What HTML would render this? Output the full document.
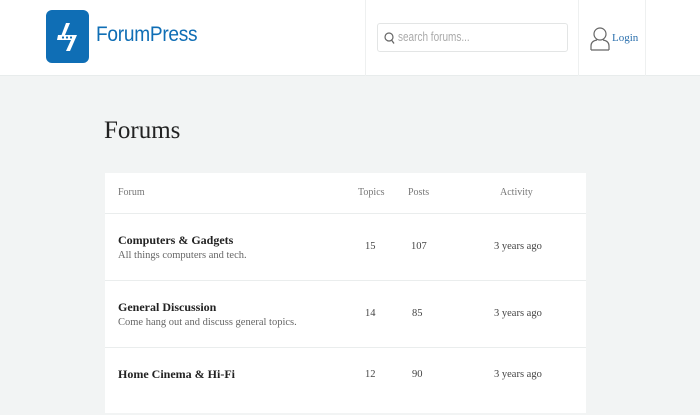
<!DOCTYPE html>
<html><head><meta charset="utf-8"><style>
*{margin:0;padding:0;box-sizing:border-box}
body{width:700px;height:400px;overflow:hidden;background:#f2f4f4;font-family:"Liberation Serif",serif;position:relative}
.hdr{position:absolute;left:0;top:0;width:700px;height:76px;background:#fff;border-bottom:1px solid #e8ecec}
.logo{position:absolute;left:46px;top:10px;width:43px;height:53px;background:#0f6eb5;border-radius:6px}
.brand{position:absolute;left:96px;top:23px;font-family:"Liberation Sans",sans-serif;font-size:21px;color:#0f6eb5;letter-spacing:-0.3px;transform:scaleX(.91);transform-origin:left}
.vl{position:absolute;top:0;height:76px;width:1px;background:#eef0f0}
.search{position:absolute;left:377px;top:23px;width:191px;height:29px;border:1px solid #e3e5e5;border-radius:3px;background:#fff}
.search span{position:absolute;left:20px;top:6px;font-family:"Liberation Sans",sans-serif;font-size:12.5px;color:#aaa;transform:scaleX(.8);transform-origin:left}
.login{position:absolute;left:612px;top:32px;font-size:11px;color:#2a6fad}
h1{position:absolute;left:104px;top:117px;font-weight:normal;font-size:25px;color:#222}
.tbl{position:absolute;left:105px;top:173px;width:481px;height:240px;background:#fff}
.row{position:absolute;left:0;width:481px;border-bottom:1px solid #eaeded}
.c{position:absolute;font-size:10px;color:#777}
.t{position:absolute;left:13px;font-size:12px;font-weight:bold;color:#222}
.d{position:absolute;left:13px;font-size:10.5px;color:#666}
.n{position:absolute;font-size:10.5px;color:#444}
</style></head><body>
<div class="hdr">
 <div class="logo"><svg width="43" height="53" viewBox="0 0 43 53"><path d="M14 29 L20 13 L24 13 L19 25 Z" fill="#fff"/><path d="M12 25 H31 L24 41 H20 L25 30 H11 Z" fill="#fff"/><circle cx="17" cy="27.5" r="1.1" fill="#0f6eb5"/><circle cx="21" cy="27.5" r="1.1" fill="#0f6eb5"/><circle cx="25" cy="27.5" r="1.1" fill="#0f6eb5"/></svg></div>
 <div class="brand">ForumPress</div>
 <div class="vl" style="left:365px"></div>
 <div class="vl" style="left:578px"></div>
 <div class="vl" style="left:645px"></div>
 <div class="search"><svg style="position:absolute;left:6px;top:8px" width="11" height="13" viewBox="0 0 11 13"><circle cx="5" cy="5" r="4" fill="none" stroke="#666" stroke-width="1.2"/><path d="M7.5 8 L10 11.5" stroke="#666" stroke-width="1.3"/></svg><span>search forums...</span></div>
 <svg style="position:absolute;left:590px;top:26px" width="20" height="25" viewBox="0 0 20 25"><circle cx="10" cy="8" r="6" fill="none" stroke="#666" stroke-width="1.2"/><path d="M1 24 V20 Q1 15 7 14 M19 24 V20 Q19 15 13 14 M1 24 H19" fill="none" stroke="#666" stroke-width="1.2"/></svg>
 <div class="login">Login</div>
</div>
<h1>Forums</h1>
<div class="tbl">
 <div class="row" style="top:0;height:41px">
  <div class="c" style="left:13px;top:14px">Forum</div>
  <div class="c" style="left:253px;top:14px">Topics</div>
  <div class="c" style="left:303px;top:14px">Posts</div>
  <div class="c" style="left:395px;top:14px">Activity</div>
 </div>
 <div class="row" style="top:41px;height:67px">
  <div class="t" style="top:19px">Computers &amp; Gadgets</div>
  <div class="d" style="top:36px">All things computers and tech.</div>
  <div class="n" style="left:260px;top:27px">15</div>
  <div class="n" style="left:306px;top:27px">107</div>
  <div class="n" style="left:389px;top:27px">3 years ago</div>
 </div>
 <div class="row" style="top:108px;height:67px">
  <div class="t" style="top:19px">General Discussion</div>
  <div class="d" style="top:36px">Come hang out and discuss general topics.</div>
  <div class="n" style="left:260px;top:27px">14</div>
  <div class="n" style="left:307px;top:27px">85</div>
  <div class="n" style="left:389px;top:27px">3 years ago</div>
 </div>
 <div class="row" style="top:175px;height:67px;border:none">
  <div class="t" style="top:19px">Home Cinema &amp; Hi-Fi</div>
  <div class="n" style="left:260px;top:21px">12</div>
  <div class="n" style="left:307px;top:21px">90</div>
  <div class="n" style="left:389px;top:21px">3 years ago</div>
 </div>
</div>
</body></html>
